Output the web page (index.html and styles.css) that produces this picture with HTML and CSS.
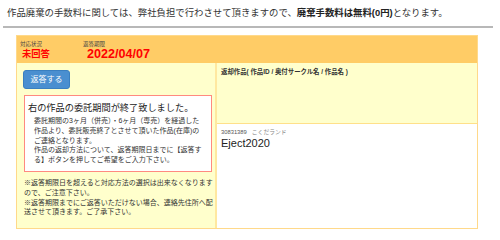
FILE: index.html
```html
<!DOCTYPE html>
<html lang="ja">
<head>
<meta charset="utf-8">
<link rel="stylesheet" href="styles.css">
</head>
<body>
<p class="lead">作品廃棄の手数料に関しては、弊社負担で行わさせて頂きますので、<strong>廃棄手数料は無料(0円)</strong>となります。</p>
<hr class="rule">
<div class="card">
  <div class="card-head">
    <div class="field field-status">
      <div class="field-label">対応状況</div>
      <div class="field-value">未回答</div>
    </div>
    <div class="field">
      <div class="field-label">返答期限</div>
      <div class="field-value field-date">2022/04/07</div>
    </div>
  </div>
  <div class="card-body">
    <div class="col-left">
      <button class="btn" type="button">返答する</button>
      <div class="notice">
        <div class="notice-title">右の作品の委託期間が終了致しました。</div>
        <p class="notice-text">委託期間の3ヶ月（併売）・6ヶ月（専売）を経過した作品より、委託販売終了とさせて頂いた作品(在庫)のご連絡となります。<br>作品の返却方法について、返答期限日までに【返答する】ボタンを押してご希望をご入力下さい。</p>
      </div>
      <p class="notes">※返答期限日を超えると対応方法の選択は出来なくなりますので、ご注意下さい。<br>※返答期限までにご返答いただけない場合、連絡先住所へ配送させて頂きます。ご了承下さい。</p>
    </div>
    <div class="col-right">
      <div class="items-head">返却作品( 作品ID / 奥付サークル名 / 作品名 )</div>
      <div class="items-cell">
        <div class="item-meta">30831389<span class="item-circle">こくだランド</span></div>
        <div class="item-name">Eject2020</div>
      </div>
    </div>
  </div>
</div>
</body>
</html>
```
FILE: styles.css
```css
html, body {
  margin: 0;
  padding: 0;
  background: #fff;
}
body {
  width: 500px;
  height: 240px;
  overflow: hidden;
  font-family: "Liberation Sans", "Noto Sans CJK JP", sans-serif;
  color: #333;
}
.lead {
  margin: 0;
  padding: 6px 0 0 7px;
  font-size: 9.4px;
  line-height: 14px;
  color: #333;
  white-space: nowrap;
}
.lead strong {
  color: #222;
}
.rule {
  margin: 6px 7px 0 3px;
  border: 0;
  border-top: 2px solid #b8b8b8;
  height: 0;
}
.card {
  margin: 7px 0 0 16px;
  width: 460px;
  border: 1px solid #ffd98a;
}
.card-head {
  display: flex;
  background: #ffcc66;
  height: 27px;
  padding: 4px 0 0 3px;
  box-sizing: border-box;
}
.field-status {
  width: 63px;
}
.field-label {
  font-size: 5.5px;
  line-height: 8px;
  color: #444;
}
.field-value {
  padding-left: 2px;
  font-size: 9.3px;
  line-height: 13px;
  font-weight: bold;
  color: #ff0000;
}
.field-date {
  padding-left: 4px;
  font-size: 12.6px;
}
.card-body {
  display: grid;
  grid-template-columns: 200px 1fr;
  background: #ffffcc;
}
.col-left {
  padding: 7px 1px 0 6px;
  border-right: 2px solid #ffe8a0;
}
.btn {
  display: block;
  width: 47px;
  height: 19px;
  padding: 0;
  border: 1px solid #3a7fc0;
  border-radius: 3px;
  background: #4a8fd0;
  color: #fff;
  font-family: "Liberation Sans", "Noto Sans CJK JP", sans-serif;
  font-size: 8px;
  line-height: 17px;
}
.notice {
  margin-top: 6px;
  margin-left: 1px;
  width: 188px;
  box-sizing: border-box;
  border: 1px solid #ff8a80;
  background: #fff;
  padding: 4px 5px 6px 3px;
}
.notice-title {
  font-size: 9.2px;
  line-height: 16px;
  color: #222;
}
.notice-text {
  margin: 0;
  padding-left: 6px;
  font-size: 7px;
  line-height: 9.8px;
  color: #333;
}
.notes {
  margin: 6px 0 0 1px;
  padding-bottom: 11px;
  font-size: 7px;
  line-height: 9.8px;
  color: #333;
}
.col-right {
  display: flex;
  flex-direction: column;
}
.items-head {
  height: 60px;
  box-sizing: border-box;
  padding: 4px 3px 4px 4px;
  font-size: 6.4px;
  line-height: 10px;
  font-weight: bold;
  color: #333;
}
.items-cell {
  flex: 1;
  background: #fff;
  border-top: 1px solid #ffe08a;
  padding: 4px 3px 4px 4px;
}
.item-meta {
  font-size: 5.8px;
  line-height: 8px;
  color: #555;
}
.item-circle {
  margin-left: 5px;
  color: #888;
}
.item-name {
  font-size: 11px;
  line-height: 14px;
  color: #222;
}
```
